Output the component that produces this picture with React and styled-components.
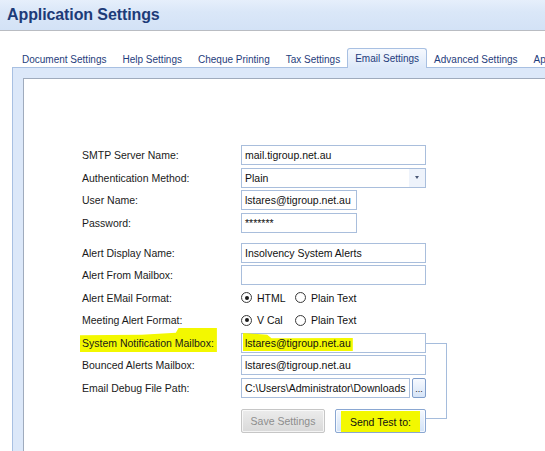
import React from "react";
import styled, { createGlobalStyle } from "styled-components";

const GlobalStyle = createGlobalStyle`
  html, body {
    margin: 0;
    padding: 0;
    background: #ffffff;
  }
  body {
    font-family: "Liberation Sans", Arial, sans-serif;
    color: #1a1a1a;
  }
`;

const Page = styled.div`
  width: 545px;
  height: 451px;
  overflow: hidden;
  background: #ffffff;
`;

const TitleBar = styled.header`
  height: 30px;
  display: flex;
  align-items: center;
  padding-left: 7px;
  background: linear-gradient(#e6effb 0%, #dae7f8 40%, #d3e2f6 100%);
  border-bottom: 1px solid #b9bcc2;
`;

const Title = styled.h1`
  margin: 0;
  font-size: 16px;
  font-weight: 700;
  color: #1d3b78;
  letter-spacing: -0.1px;
`;

const TabStrip = styled.nav`
  display: flex;
  align-items: flex-end;
  height: 20px;
  margin-top: 17px;
  padding-left: 14px;
  white-space: nowrap;
`;

const Tab = styled.div`
  display: flex;
  align-items: center;
  height: ${(p) => (p.$active ? "19px" : "18px")};
  padding: 0 7px;
  margin: ${(p) => (p.$active ? "0 -1px" : "0")};
  font-size: 10px;
  color: #1f3d7c;
  border: ${(p) => (p.$active ? "1px solid #a8c0e2" : "1px solid transparent")};
  border-bottom: none;
  border-radius: 3px 3px 0 0;
  background: ${(p) =>
    p.$active ? "linear-gradient(#f6f9fe, #dce8f9)" : "transparent"};
  position: relative;
  z-index: 1;
`;

const Frame = styled.section`
  margin-left: 12px;
  width: 560px;
  height: 400px;
  padding: 10px 0 0 10px;
  background: #dce8f9;
  border-top: 1px solid #a8c0e2;
  border-left: 1px solid #a8c0e2;
  margin-top: -1px;
`;

const Sheet = styled.div`
  height: 100%;
  background: #ffffff;
  border-top: 1px solid #9fabbd;
  border-left: 1px solid #9fabbd;
`;

const Form = styled.div`
  padding: 66px 0 0 58px;
  display: flex;
  flex-direction: column;
`;

const Group = styled.div`
  display: flex;
  flex-direction: column;
  gap: ${(p) => p.$gap || "2.5px"};
  margin-top: ${(p) => p.$top || "0"};
  position: relative;
`;

const Row = styled.div`
  display: grid;
  grid-template-columns: 159px auto;
  align-items: center;
  height: 20px;
`;

const Label = styled.span`
  font-size: 10.5px;
  color: #1a1a1a;
  white-space: nowrap;
`;

const TextBox = styled.div`
  box-sizing: border-box;
  width: ${(p) => p.$width || "185px"};
  height: 20px;
  display: flex;
  align-items: center;
  padding: 0 3px;
  border: 1px solid #a9bedc;
  background: #ffffff;
  font-size: 10.5px;
  color: #111;
  white-space: nowrap;
  overflow: visible;
`;

const Combo = styled(TextBox)`
  justify-content: space-between;
  padding-right: 0;
`;

const DropButton = styled.span`
  width: 16px;
  height: 100%;
  display: flex;
  align-items: center;
  justify-content: center;
  background: #eef3fb;
  &::after {
    content: "";
    border-left: 2.5px solid transparent;
    border-right: 2.5px solid transparent;
    border-top: 3px solid #4a5876;
  }
`;

const PathRow = styled.div`
  display: flex;
  align-items: center;
  gap: 2px;
`;

const Ellipsis = styled.button`
  box-sizing: border-box;
  width: 14px;
  height: 20px;
  padding: 0 0 3px;
  display: flex;
  align-items: flex-end;
  justify-content: center;
  border: 1px solid #7f9dca;
  border-radius: 2px;
  background: linear-gradient(#f7faff, #d6e4f7);
  font-family: "Liberation Sans", Arial, sans-serif;
  font-size: 9px;
  line-height: 1;
  color: #222;
`;

const Radios = styled.div`
  display: flex;
  align-items: center;
`;

const RadioOption = styled.label`
  display: flex;
  align-items: center;
  gap: 5px;
  min-width: ${(p) => p.$width || "auto"};
  font-size: 10.5px;
  color: #111;
`;

const RadioDot = styled.span`
  box-sizing: border-box;
  width: 11px;
  height: 11px;
  border-radius: 50%;
  border: 1px solid #3c3c3c;
  background: radial-gradient(circle, #ffffff 55%, #e4e4e4 100%);
  display: flex;
  align-items: center;
  justify-content: center;
  &::after {
    content: "";
    width: 4px;
    height: 4px;
    border-radius: 50%;
    background: ${(p) => (p.$checked ? "#1a1a1a" : "transparent")};
  }
`;

const Actions = styled.div`
  display: flex;
  gap: 10px;
  margin: 9px 0 0 159px;
`;

const Button = styled.button`
  box-sizing: border-box;
  width: ${(p) => p.$width};
  height: 24px;
  padding: 0;
  border-radius: 2px;
  font-family: "Liberation Sans", Arial, sans-serif;
  font-size: 10.5px;
  border: 1px solid ${(p) => (p.disabled ? "#c6c6c6" : "#8aa7d2")};
  color: ${(p) => (p.disabled ? "#8d8d8d" : "#111")};
  background: ${(p) =>
    p.disabled
      ? "linear-gradient(#ececec, #d9d9d9)"
      : "linear-gradient(#f5f9ff 0%, #e3edfa 50%, #d2e3f8 100%)"};
  box-shadow: inset 0 0 0 1px rgba(255, 255, 255, 0.7);
`;

const Marker = styled.span`
  display: inline-block;
  background: #f3f800;
  padding: ${(p) => p.$pad || "4px 2px 2px"};
  margin: ${(p) => p.$margin || "-4px -2px -2px"};
  clip-path: ${(p) => p.$clip || "none"};
`;

const Bracket = styled.div`
  position: absolute;
  left: 344px;
  top: 10px;
  width: 20px;
  height: 74px;
  border: 1px solid #a5bcdc;
  border-left: none;
  pointer-events: none;
`;

const tabs = [
  "Document Settings",
  "Help Settings",
  "Cheque Printing",
  "Tax Settings",
  "Email Settings",
  "Advanced Settings",
  "Application",
];

const Radio = ({ checked, children, width }) => (
  <RadioOption $width={width}>
    <RadioDot $checked={checked} />
    {children}
  </RadioOption>
);

export default function App() {
  return (
    <Page>
      <GlobalStyle />
      <TitleBar>
        <Title>Application Settings</Title>
      </TitleBar>

      <TabStrip>
        {tabs.map((t) => (
          <Tab key={t} $active={t === "Email Settings"}>
            {t}
          </Tab>
        ))}
      </TabStrip>

      <Frame>
        <Sheet>
          <Form>
            <Group $gap="2.67px">
              <Row>
                <Label>SMTP Server Name:</Label>
                <TextBox>mail.tigroup.net.au</TextBox>
              </Row>
              <Row>
                <Label>Authentication Method:</Label>
                <Combo>
                  Plain
                  <DropButton />
                </Combo>
              </Row>
              <Row>
                <Label>User Name:</Label>
                <TextBox $width="116px">lstares@tigroup.net.au</TextBox>
              </Row>
              <Row>
                <Label>Password:</Label>
                <TextBox $width="116px">*******</TextBox>
              </Row>
            </Group>

            <Group $top="10px">
              <Row>
                <Label>Alert Display Name:</Label>
                <TextBox>Insolvency System Alerts</TextBox>
              </Row>
              <Row>
                <Label>Alert From Mailbox:</Label>
                <TextBox />
              </Row>
              <Row>
                <Label>Alert EMail Format:</Label>
                <Radios>
                  <Radio checked width="54px">HTML</Radio>
                  <Radio>Plain Text</Radio>
                </Radios>
              </Row>
              <Row>
                <Label>Meeting Alert Format:</Label>
                <Radios>
                  <Radio checked width="54px">V Cal</Radio>
                  <Radio>Plain Text</Radio>
                </Radios>
              </Row>
            </Group>

            <Group $top="2.5px">
              <Bracket />
              <Row>
                <Label>
                  <Marker
                    $pad="9px 3px 3px 2px"
                    $margin="-9px -3px -3px -2px"
                    $clip="polygon(0 30%, 45% 28%, 70% 20%, 72% 0, 100% 0, 100% 100%, 0 100%)"
                  >
                    System Notification Mailbox:
                  </Marker>
                </Label>
                <TextBox>
                  <Marker
                    $pad="4px 2px 2px"
                    $margin="-4px -2px -2px"
                    $clip="polygon(0 0, 22% 10%, 26% 30%, 100% 28%, 100% 100%, 0 100%)"
                  >
                    lstares@tigroup.net.au
                  </Marker>
                </TextBox>
              </Row>
              <Row>
                <Label>Bounced Alerts Mailbox:</Label>
                <TextBox>lstares@tigroup.net.au</TextBox>
              </Row>
              <Row>
                <Label>Email Debug File Path:</Label>
                <PathRow>
                  <TextBox $width="169px">C:\Users\Administrator\Downloads</TextBox>
                  <Ellipsis>...</Ellipsis>
                </PathRow>
              </Row>
              <Actions>
                <Button $width="84px" disabled>
                  Save Settings
                </Button>
                <Button $width="91px">
                  <Marker $pad="5px 9px 4px" $margin="0">
                    Send Test to:
                  </Marker>
                </Button>
              </Actions>
            </Group>
          </Form>
        </Sheet>
      </Frame>
    </Page>
  );
}
